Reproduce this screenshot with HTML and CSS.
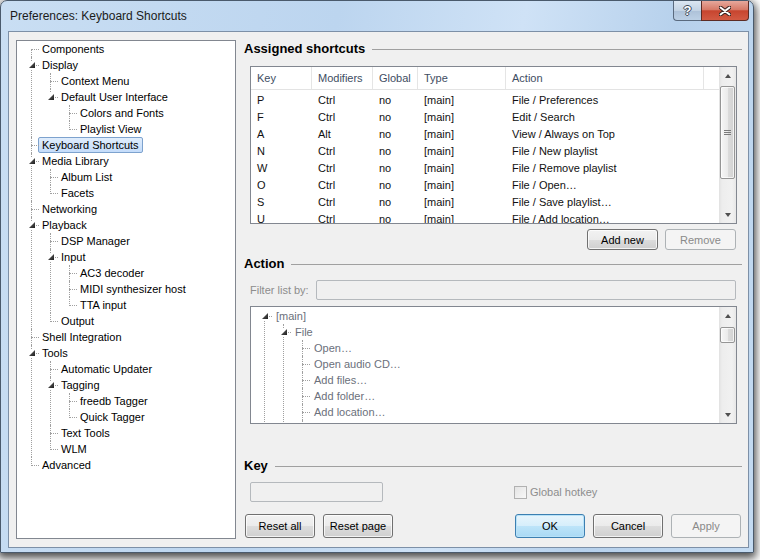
FILE: index.html
```html
<html>

<head>
	<link rel="stylesheet" href="styles.css">
</head>

<body>
	<div class="window">
		<div class="titlebar">
			<span class="title">Preferences: Keyboard Shortcuts</span>
			<div class="caption">
				<div class="cap-btn cap-help">?</div>
				<div class="cap-btn cap-close">
					<svg width="12" height="10" viewBox="0 0 12 10">
						<path d="M1.5 1.5 L10.5 8.5 M10.5 1.5 L1.5 8.5" stroke="#3a2320" stroke-width="4" stroke-linecap="round" fill="none" />
						<path d="M1.5 1.5 L10.5 8.5 M10.5 1.5 L1.5 8.5" stroke="#fff" stroke-width="2" stroke-linecap="round" fill="none" />
					</svg>
				</div>
			</div>
		</div>

		<div class="client">
			<!-- page tree -->
			<div class="tree-box">
				<ul class="tree">
					<li><div class="row"><span class="lbl">Components</span></div></li>
					<li><div class="row"><span class="tog"></span><span class="lbl">Display</span></div>
						<ul>
							<li><div class="row"><span class="lbl">Context Menu</span></div></li>
							<li><div class="row"><span class="tog"></span><span class="lbl">Default User Interface</span></div>
								<ul>
									<li><div class="row"><span class="lbl">Colors and Fonts</span></div></li>
									<li><div class="row"><span class="lbl">Playlist View</span></div></li>
								</ul>
							</li>
						</ul>
					</li>
					<li><div class="row"><span class="lbl sel">Keyboard Shortcuts</span></div></li>
					<li><div class="row"><span class="tog"></span><span class="lbl">Media Library</span></div>
						<ul>
							<li><div class="row"><span class="lbl">Album List</span></div></li>
							<li><div class="row"><span class="lbl">Facets</span></div></li>
						</ul>
					</li>
					<li><div class="row"><span class="lbl">Networking</span></div></li>
					<li><div class="row"><span class="tog"></span><span class="lbl">Playback</span></div>
						<ul>
							<li><div class="row"><span class="lbl">DSP Manager</span></div></li>
							<li><div class="row"><span class="tog"></span><span class="lbl">Input</span></div>
								<ul>
									<li><div class="row"><span class="lbl">AC3 decoder</span></div></li>
									<li><div class="row"><span class="lbl">MIDI synthesizer host</span></div></li>
									<li><div class="row"><span class="lbl">TTA input</span></div></li>
								</ul>
							</li>
							<li><div class="row"><span class="lbl">Output</span></div></li>
						</ul>
					</li>
					<li><div class="row"><span class="lbl">Shell Integration</span></div></li>
					<li><div class="row"><span class="tog"></span><span class="lbl">Tools</span></div>
						<ul>
							<li><div class="row"><span class="lbl">Automatic Updater</span></div></li>
							<li><div class="row"><span class="tog"></span><span class="lbl">Tagging</span></div>
								<ul>
									<li><div class="row"><span class="lbl">freedb Tagger</span></div></li>
									<li><div class="row"><span class="lbl">Quick Tagger</span></div></li>
								</ul>
							</li>
							<li><div class="row"><span class="lbl">Text Tools</span></div></li>
							<li><div class="row"><span class="lbl">WLM</span></div></li>
						</ul>
					</li>
					<li><div class="row"><span class="lbl">Advanced</span></div></li>
				</ul>
			</div>

			<div class="panel">
				<div class="group">Assigned shortcuts</div>

				<div class="list">
					<div class="list-view">
						<div class="list-head">
							<div>Key</div>
							<div>Modifiers</div>
							<div>Global</div>
							<div>Type</div>
							<div>Action</div>
							<div></div>
						</div>
						<div class="list-body">
							<div class="list-row"><div>P</div><div>Ctrl</div><div>no</div><div>[main]</div><div>File / Preferences</div></div>
							<div class="list-row"><div>F</div><div>Ctrl</div><div>no</div><div>[main]</div><div>Edit / Search</div></div>
							<div class="list-row"><div>A</div><div>Alt</div><div>no</div><div>[main]</div><div>View / Always on Top</div></div>
							<div class="list-row"><div>N</div><div>Ctrl</div><div>no</div><div>[main]</div><div>File / New playlist</div></div>
							<div class="list-row"><div>W</div><div>Ctrl</div><div>no</div><div>[main]</div><div>File / Remove playlist</div></div>
							<div class="list-row"><div>O</div><div>Ctrl</div><div>no</div><div>[main]</div><div>File / Open…</div></div>
							<div class="list-row"><div>S</div><div>Ctrl</div><div>no</div><div>[main]</div><div>File / Save playlist…</div></div>
							<div class="list-row"><div>U</div><div>Ctrl</div><div>no</div><div>[main]</div><div>File / Add location…</div></div>
						</div>
					</div>
					<div class="sb">
						<div class="sb-btn up"></div>
						<div class="thumb big"><span class="grip"></span></div>
						<div class="sb-btn down"></div>
					</div>
				</div>

				<div class="list-buttons">
					<button class="btn small">Add new</button>
					<button class="btn small" disabled>Remove</button>
				</div>

				<div class="group action-group">Action</div>

				<div class="filter-row">
					<span class="filter-label">Filter list by:</span>
					<div class="edit"></div>
				</div>

				<div class="action-box">
					<div class="action-tree">
						<ul class="tree gray">
							<li><div class="row"><span class="tog"></span><span class="lbl">[main]</span></div>
								<ul>
									<li><div class="row"><span class="tog"></span><span class="lbl">File</span></div>
										<ul>
											<li><div class="row"><span class="lbl">Open…</span></div></li>
											<li><div class="row"><span class="lbl">Open audio CD…</span></div></li>
											<li><div class="row"><span class="lbl">Add files…</span></div></li>
											<li><div class="row"><span class="lbl">Add folder…</span></div></li>
											<li><div class="row"><span class="lbl">Add location…</span></div></li>
											<li><div class="row"><span class="lbl">New playlist</span></div></li>
											<li><div class="row"><span class="lbl">Load playlist…</span></div></li>
										</ul>
									</li>
									<li><div class="row"><span class="lbl">Edit</span></div></li>
								</ul>
							</li>
							<li><div class="row"><span class="lbl">[context menu]</span></div></li>
						</ul>
					</div>
					<div class="sb">
						<div class="sb-btn up"></div>
						<div class="thumb small-thumb"></div>
						<div class="sb-btn down"></div>
					</div>
				</div>

				<div class="group key-group">Key</div>

				<div class="key-row">
					<div class="edit key-edit"></div>
					<label class="check"><span class="box"></span>Global hotkey</label>
				</div>

				<div class="bottom-buttons">
					<button class="btn">Reset all</button>
					<button class="btn">Reset page</button>
					<button class="btn default push">OK</button>
					<button class="btn">Cancel</button>
					<button class="btn" disabled>Apply</button>
				</div>
			</div>
		</div>
	</div>
</body>

</html>
```

FILE: styles.css
```css
* {
	box-sizing: border-box;
}

body {
	margin: 0;
	width: 760px;
	height: 560px;
	overflow: hidden;
	background: #ffffff;
	font-family: "Liberation Sans", Arial, sans-serif;
	font-size: 11px;
	color: #000;
}

/* window frame */
.window {
	width: 754px;
	height: 553px;
	border: 1px solid #4a5a6c;
	border-radius: 7px 7px 0 0;
	background: linear-gradient(100deg, #c9def3 0%, #bcd5ef 40%, #cfe2f6 62%, #b7d1ec 80%, #c4dbf2 100%);
	box-shadow: 0 3px 9px 2px rgba(0, 0, 0, 0.7);
	display: flex;
	flex-direction: column;
}

.titlebar {
	height: 30px;
	flex: none;
	display: flex;
	justify-content: space-between;
	align-items: flex-start;
}

.title {
	padding: 7px 0 0 9px;
	font-size: 12px;
	line-height: 16px;
	color: #1b1b1b;
}

.caption {
	display: flex;
	margin-right: 4px;
}

.cap-btn {
	height: 20px;
	border: 1px solid #5a6a7e;
	border-top: none;
	display: flex;
	align-items: center;
	justify-content: center;
}

.cap-help {
	width: 28px;
	border-right: none;
	border-radius: 0 0 0 4px;
	background: linear-gradient(#dbe6f2, #c3d3e4 50%, #adc1d8 51%, #bcd0e5);
	color: #fff;
	font-weight: bold;
	font-size: 13px;
	text-shadow: 1px 0 0 #3d4a5a, -1px 0 0 #3d4a5a, 0 1px 0 #3d4a5a, 0 -1px 0 #3d4a5a;
}

.cap-close {
	width: 48px;
	border-color: #5c2b24;
	border-radius: 0 0 4px 0;
	background: linear-gradient(#e6a89c, #d77a68 45%, #c7452f 52%, #d25a43);
}

/* client area */
.client {
	flex: 1;
	margin: 0 4px 4px 7px;
	border: 1px solid #7d90a7;
	background: #f0f0f0;
	display: flex;
	gap: 8px;
	padding: 8px 6px 8px 7px;
}

.tree-box {
	width: 220px;
	flex: none;
	background: #fff;
	border: 1px solid #828790;
	overflow: hidden;
}

/* tree view */
.tree,
.tree ul {
	list-style: none;
	margin: 0;
	padding: 0;
}

.tree {
	padding-left: 14px;
}

.tree ul {
	margin-left: 8px;
}

.tree li {
	position: relative;
	padding-left: 11px;
}

.tree li::before {
	content: '';
	position: absolute;
	left: 0;
	top: 8px;
	width: 8px;
	border-top: 1px dotted #a0a0a0;
}

.tree li::after {
	content: '';
	position: absolute;
	left: 0;
	top: 0;
	bottom: 0;
	border-left: 1px dotted #a0a0a0;
}

.tree li:last-child::after {
	bottom: auto;
	height: 9px;
}

.tree > li:first-child::after {
	top: 8px;
}

.tree .row {
	height: 16px;
	line-height: 16px;
	white-space: nowrap;
}

.tree .lbl {
	display: inline-block;
	vertical-align: top;
	margin-left: -4px;
	padding: 0 3px;
	border: 1px solid transparent;
	line-height: 14px;
}

.tree .sel {
	border-color: #7da2ce;
	border-radius: 2px;
	background: linear-gradient(#e0edfc, #c4dcfa);
}

.tog {
	position: absolute;
	z-index: 1;
	left: -3px;
	top: 4px;
	width: 8px;
	height: 8px;
	background: #fff;
}

.tog::after {
	content: '';
	position: absolute;
	left: 1px;
	top: 1px;
	width: 6px;
	height: 6px;
	background: linear-gradient(135deg, #6a6a6a, #1e1e1e);
	clip-path: polygon(100% 0, 100% 100%, 0 100%);
}

.tree.gray {
	padding-left: 13px;
	color: #6b707b;
}

.tree.gray ul {
	margin-left: 7px;
}

.tree.gray li {
	padding-left: 12px;
}

/* right side */
.panel {
	flex: 1;
	display: flex;
	flex-direction: column;
}

.group {
	height: 18px;
	line-height: 18px;
	flex: none;
	display: flex;
	align-items: center;
	font-weight: bold;
	font-size: 13px;
	color: #000;
}

.group::after {
	content: '';
	flex: 1;
	margin-left: 7px;
	border-top: 1px solid #a0a0a0;
}

.list {
	margin: 8px 5px 0 6px;
	height: 158px;
	flex: none;
	border: 1px solid #828790;
	background: #fff;
	display: flex;
}

.list-view {
	flex: 1;
	overflow: hidden;
}

.list-head,
.list-row {
	display: grid;
	grid-template-columns: 61px 61px 45px 88px 198px 1fr;
}

.list-head {
	height: 23px;
	border-bottom: 1px solid #e3e3e3;
	color: #3e4d62;
}

.list-head div {
	padding: 1px 0 0 6px;
	line-height: 21px;
	border-right: 1px solid #e5e5e5;
}

.list-head div:last-child {
	border-right: none;
}

.list-body {
	padding-top: 2px;
}

.list-row {
	height: 17px;
	line-height: 17px;
	color: #111;
}

.list-row div {
	padding-left: 6px;
	white-space: nowrap;
}

/* scrollbars */
.sb {
	width: 17px;
	flex: none;
	display: flex;
	flex-direction: column;
	background: linear-gradient(to right, #e1e1e1, #ededed 3px, #f1f1f1 13px, #e7e7e7);
}

.sb-btn {
	height: 17px;
	flex: none;
	display: flex;
	align-items: center;
	justify-content: center;
}

.sb-btn::before {
	content: '';
	border-left: 3.5px solid transparent;
	border-right: 3.5px solid transparent;
}

.sb-btn.up::before {
	border-bottom: 4px solid #4f4f4f;
}

.sb-btn.down {
	margin-top: auto;
}

.sb-btn.down::before {
	border-top: 4px solid #4f4f4f;
}

.thumb {
	margin: 2px 1px 0 1px;
	border: 1px solid #959595;
	border-radius: 2px;
	background: linear-gradient(to right, #f6f6f6, #ebebeb 50%, #dcdcdc 51%, #d2d2d2);
	box-shadow: inset 0 0 0 1px rgba(255, 255, 255, 0.7);
	display: flex;
	align-items: center;
	justify-content: center;
}

.thumb.big {
	height: 93px;
}

.thumb.small-thumb {
	margin-top: 3px;
	height: 16px;
}

.grip {
	width: 7px;
	height: 5px;
	background: repeating-linear-gradient(#7a7a7a 0 1px, transparent 1px 2px);
}

/* buttons */
.btn {
	width: 70px;
	height: 24px;
	padding: 0;
	border: 1px solid #707070;
	border-radius: 3px;
	background: linear-gradient(#f2f2f2, #ebebeb 50%, #dddddd 51%, #cfcfcf);
	box-shadow: inset 0 0 0 1px rgba(255, 255, 255, 0.75);
	font-family: "Liberation Sans", Arial, sans-serif;
	font-size: 11px;
	color: #000;
}

.btn.small {
	width: 71px;
	height: 21px;
}

.btn.default {
	border-color: #3c7fb1;
	background: linear-gradient(#e8f5fc, #d6eefb 50%, #bde4f9 51%, #a9d9f4);
	box-shadow: inset 0 0 0 1px #b8e2f8;
}

.btn:disabled {
	border-color: #adb2b5;
	background: #f4f4f4;
	box-shadow: none;
	color: #8a8a8a;
}

.list-buttons {
	margin: 5px 6px 0 0;
	display: flex;
	justify-content: flex-end;
	gap: 7px;
}

.action-group {
	margin-top: 5px;
}

.filter-row {
	margin: 7px 6px 0 6px;
	height: 20px;
	flex: none;
	display: flex;
}

.filter-label {
	width: 66px;
	flex: none;
	line-height: 20px;
	color: #8d8d8d;
}

.edit {
	flex: 1;
	height: 20px;
	border: 1px solid #b5b9bd;
	border-radius: 2px;
	background: #f0f0f0;
}

.action-box {
	margin: 6px 5px 0 6px;
	height: 118px;
	flex: none;
	border: 1px solid #828790;
	background: #fff;
	display: flex;
}

.action-tree {
	flex: 1;
	padding-top: 1px;
	overflow: hidden;
}

.key-group {
	margin-top: 33px;
}

.key-row {
	margin: 7px 0 0 6px;
	height: 20px;
	flex: none;
	display: flex;
	align-items: center;
}

.key-edit {
	flex: none;
	width: 133px;
}

.check {
	margin-left: 131px;
	display: flex;
	align-items: center;
	gap: 3px;
	color: #8d8d8d;
}

.box {
	width: 13px;
	height: 13px;
	border: 1px solid #b1b1b1;
	background: linear-gradient(135deg, #e4e4e4, #f8f8f8);
}

.bottom-buttons {
	margin: 12px 1px 0 1px;
	display: flex;
	gap: 8px;
}

.push {
	margin-left: auto;
}
```
